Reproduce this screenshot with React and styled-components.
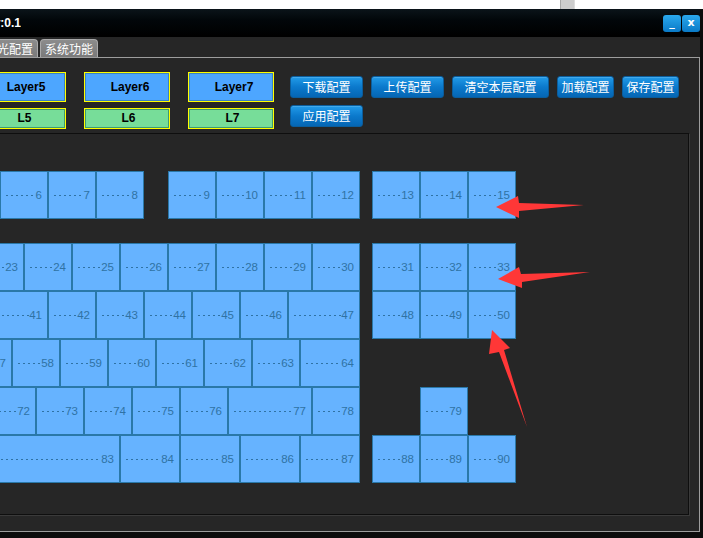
import React from "react";
import styled, { createGlobalStyle } from "styled-components";

const GlobalStyle = createGlobalStyle`
  html, body {
    margin: 0;
    padding: 0;
    background: #0c0c0c;
  }
  * {
    box-sizing: border-box;
  }
`;

const mainRows = [
  [["6"], ["7"], ["8"], ["9", 48, 24], ["10"], ["11"], ["12"]],
  [["23"], ["24"], ["25"], ["26"], ["27"], ["28"], ["29"], ["30"]],
  [["41", 72], ["42"], ["43"], ["44"], ["45"], ["46"], ["47", 72]],
  [["57", 84], ["58"], ["59"], ["60"], ["61"], ["62"], ["63"], ["64", 60]],
  [["72", 108], ["73"], ["74"], ["75"], ["76"], ["77", 84], ["78"]],
  [["83", 300], ["84", 60], ["85", 60], ["86", 60], ["87", 60]],
];

const navRows = [
  [["13"], ["14"], ["15"]],
  [["31"], ["32"], ["33"]],
  [["48"], ["49"], ["50"]],
  [],
  [["79", 48, 48]],
  [["88"], ["89"], ["90"]],
];

const layers = [5, 6, 7];

const KeyCap = ({ label, w = 48, ml = 0 }) => (
  <Key $w={w} $ml={ml}>
    <Leader />
    <KeyNum>{label}</KeyNum>
  </Key>
);

const KeyBlock = ({ rows, align }) => (
  <Block $align={align}>
    {rows.map((row, i) => (
      <Row key={i} $spaced={i === 0} $align={align}>
        {row.map(([label, w, ml]) => (
          <KeyCap key={label} label={label} w={w} ml={ml} />
        ))}
      </Row>
    ))}
  </Block>
);

const App = () => {
  return (
    <Page>
      <GlobalStyle />
      <TopStrip>
        <ScrollThumb />
      </TopStrip>
      <Frame>
        <TitleBar>
          <TitleClip>
            <TitleText>Ver:0.1</TitleText>
          </TitleClip>
          <WinButtons>
            <WinButton>_</WinButton>
            <WinButton>x</WinButton>
          </WinButtons>
        </TitleBar>
        <TabStrip>
          <Tab>灯光配置</Tab>
          <Tab>系统功能</Tab>
        </TabStrip>
        <Panel>
          <Controls>
            {layers.map((n) => (
              <LayerGroup key={n}>
                <LayerButton>Layer{n}</LayerButton>
                <LButton>L{n}</LButton>
              </LayerGroup>
            ))}
            <ConfigArea>
              <ConfigRow>
                <ConfigButton $w={73}>下载配置</ConfigButton>
                <ConfigButton $w={73}>上传配置</ConfigButton>
                <ConfigButton $w={97}>清空本层配置</ConfigButton>
                <ConfigButton $w={57}>加载配置</ConfigButton>
                <ConfigButton $w={57}>保存配置</ConfigButton>
              </ConfigRow>
              <ConfigRow>
                <ConfigButton $w={73}>应用配置</ConfigButton>
              </ConfigRow>
            </ConfigArea>
          </Controls>
          <KeyBox>
            <KeyBlock rows={mainRows} align="end" />
            <KeyBlock rows={navRows} align="start" />
          </KeyBox>
        </Panel>
      </Frame>
      <Arrows width="703" height="538" viewBox="0 0 703 538">
        <polygon points="496,207 518,196 519,203 584,205 519,211 519,218" />
        <polygon points="498,279 519,267 521,274 590,272 522,282 522,288" />
        <polygon points="492,330 510,348 504,350 527,427 499,352 489,354" />
      </Arrows>
    </Page>
  );
};

export default App;

const Page = styled.div`
  position: relative;
  width: 703px;
  height: 538px;
  overflow: hidden;
  background: #0c0c0c;
`;

const TopStrip = styled.div`
  display: flex;
  height: 9px;
  padding-left: 560px;
  background: #ffffff;
`;

const ScrollThumb = styled.div`
  width: 15px;
  height: 9px;
  background: #cdcdcd;
  border-left: 1px solid #a8a8a8;
  border-right: 1px solid #dcdcdc;
`;

const Frame = styled.div`
  width: 700px;
  overflow: hidden;
  background: #262626;
`;

const TitleBar = styled.div`
  display: flex;
  justify-content: space-between;
  align-items: center;
  height: 28px;
  background: linear-gradient(#0b141a, #02070a 40%, #000000);
  border-bottom: 1px solid #000;
`;

const TitleClip = styled.div`
  display: flex;
  justify-content: flex-end;
  width: 21px;
  overflow: hidden;
`;

const TitleText = styled.span`
  white-space: nowrap;
  color: #ffffff;
  font: bold 12px "Liberation Sans", Arial, sans-serif;
`;

const WinButtons = styled.div`
  display: flex;
  gap: 1px;
  align-self: flex-start;
  margin-top: 6px;
`;

const WinButton = styled.div`
  width: 18px;
  height: 17px;
  border-radius: 3px;
  background: linear-gradient(#2aa9ee, #0a79c6);
  color: #ffffff;
  font: bold 11px "DejaVu Sans", sans-serif;
  line-height: 15px;
  text-align: center;
`;

const TabStrip = styled.div`
  display: flex;
  align-items: flex-end;
  gap: 2px;
  height: 20px;
  margin-left: -20px;
`;

const Tab = styled.div`
  width: 58px;
  height: 18px;
  border: 1px solid #a9a9a9;
  border-bottom: none;
  border-radius: 4px 4px 0 0;
  background: linear-gradient(#8c8c8c, #7a7a7a);
  color: #ffffff;
  font: 12px "Noto Sans CJK SC", sans-serif;
  line-height: 17px;
  text-align: center;
  white-space: nowrap;
`;

const Panel = styled.div`
  margin-left: -40px;
  height: 475px;
  padding: 14px 10px 16px 19px;
  border: 1px solid #9d9d9d;
  background: #262626;
`;

const Controls = styled.div`
  display: flex;
  gap: 18px;
  height: 57px;
`;

const LayerGroup = styled.div`
  display: flex;
  flex-direction: column;
  gap: 6px;
  width: 86px;
`;

const LayerButton = styled.div`
  height: 30px;
  padding-left: 6px;
  border: 1px solid #ffff00;
  box-shadow: inset 0 0 0 1px #3b82c0;
  background: #4da6ff;
  color: #000000;
  font: bold 12px "Liberation Sans", Arial, sans-serif;
  line-height: 29px;
  text-align: center;
`;

const LButton = styled(LayerButton)`
  height: 21px;
  padding-left: 3px;
  line-height: 19px;
  background: #77dd99;
  box-shadow: inset 0 0 0 1px #3f9a72;
`;

const ConfigArea = styled.div`
  display: flex;
  flex-direction: column;
  gap: 7px;
  margin-top: 4px;
  margin-left: -2px;
`;

const ConfigRow = styled.div`
  display: flex;
  gap: 8px;
`;

const ConfigButton = styled.div`
  width: ${(p) => p.$w}px;
  height: 22px;
  border: 1px solid #0b5d9c;
  border-radius: 3px;
  background: linear-gradient(#229be8, #0b79cc 50%, #0566b4);
  box-shadow: inset 0 1px 0 rgba(255, 255, 255, 0.15);
  color: #ffffff;
  font: 12px "Noto Sans CJK SC", sans-serif;
  line-height: 20px;
  text-align: center;
  white-space: nowrap;
`;

const KeyBox = styled.div`
  display: flex;
  gap: 12px;
  margin-top: 4px;
  height: 382px;
  padding: 37px 0 31px 0;
  border: 1px solid #0e0e0e;
  box-shadow: 1px 1px 0 #3a3a3a;
  background: #262626;
`;

const Block = styled.div`
  display: flex;
  flex-direction: column;
  width: ${(p) => (p.$align === "end" ? "379px" : "auto")};
  flex-shrink: 0;
`;

const Row = styled.div`
  display: flex;
  justify-content: ${(p) => (p.$align === "end" ? "flex-end" : "flex-start")};
  height: 48px;
  margin-bottom: ${(p) => (p.$spaced ? "24px" : "0")};
`;

const Key = styled.div`
  display: flex;
  align-items: center;
  flex-shrink: 0;
  width: ${(p) => p.$w}px;
  height: 48px;
  margin-left: ${(p) => p.$ml}px;
  padding: 0 5px 0 5px;
  border: 1px solid #2a78a8;
  background: #66b3ff;
`;

const Leader = styled.span`
  flex: 1;
  height: 1px;
  margin-top: 1px;
  background: repeating-linear-gradient(
    to right,
    #2f72a4 0 2px,
    transparent 2px 5px
  );
`;

const KeyNum = styled.span`
  color: #2f72a4;
  font: 11.5px "Liberation Sans", Arial, sans-serif;
  line-height: 12px;
`;

const Arrows = styled.svg`
  position: absolute;
  top: 0;
  left: 0;
  pointer-events: none;
  fill: #ff3737;
`;
